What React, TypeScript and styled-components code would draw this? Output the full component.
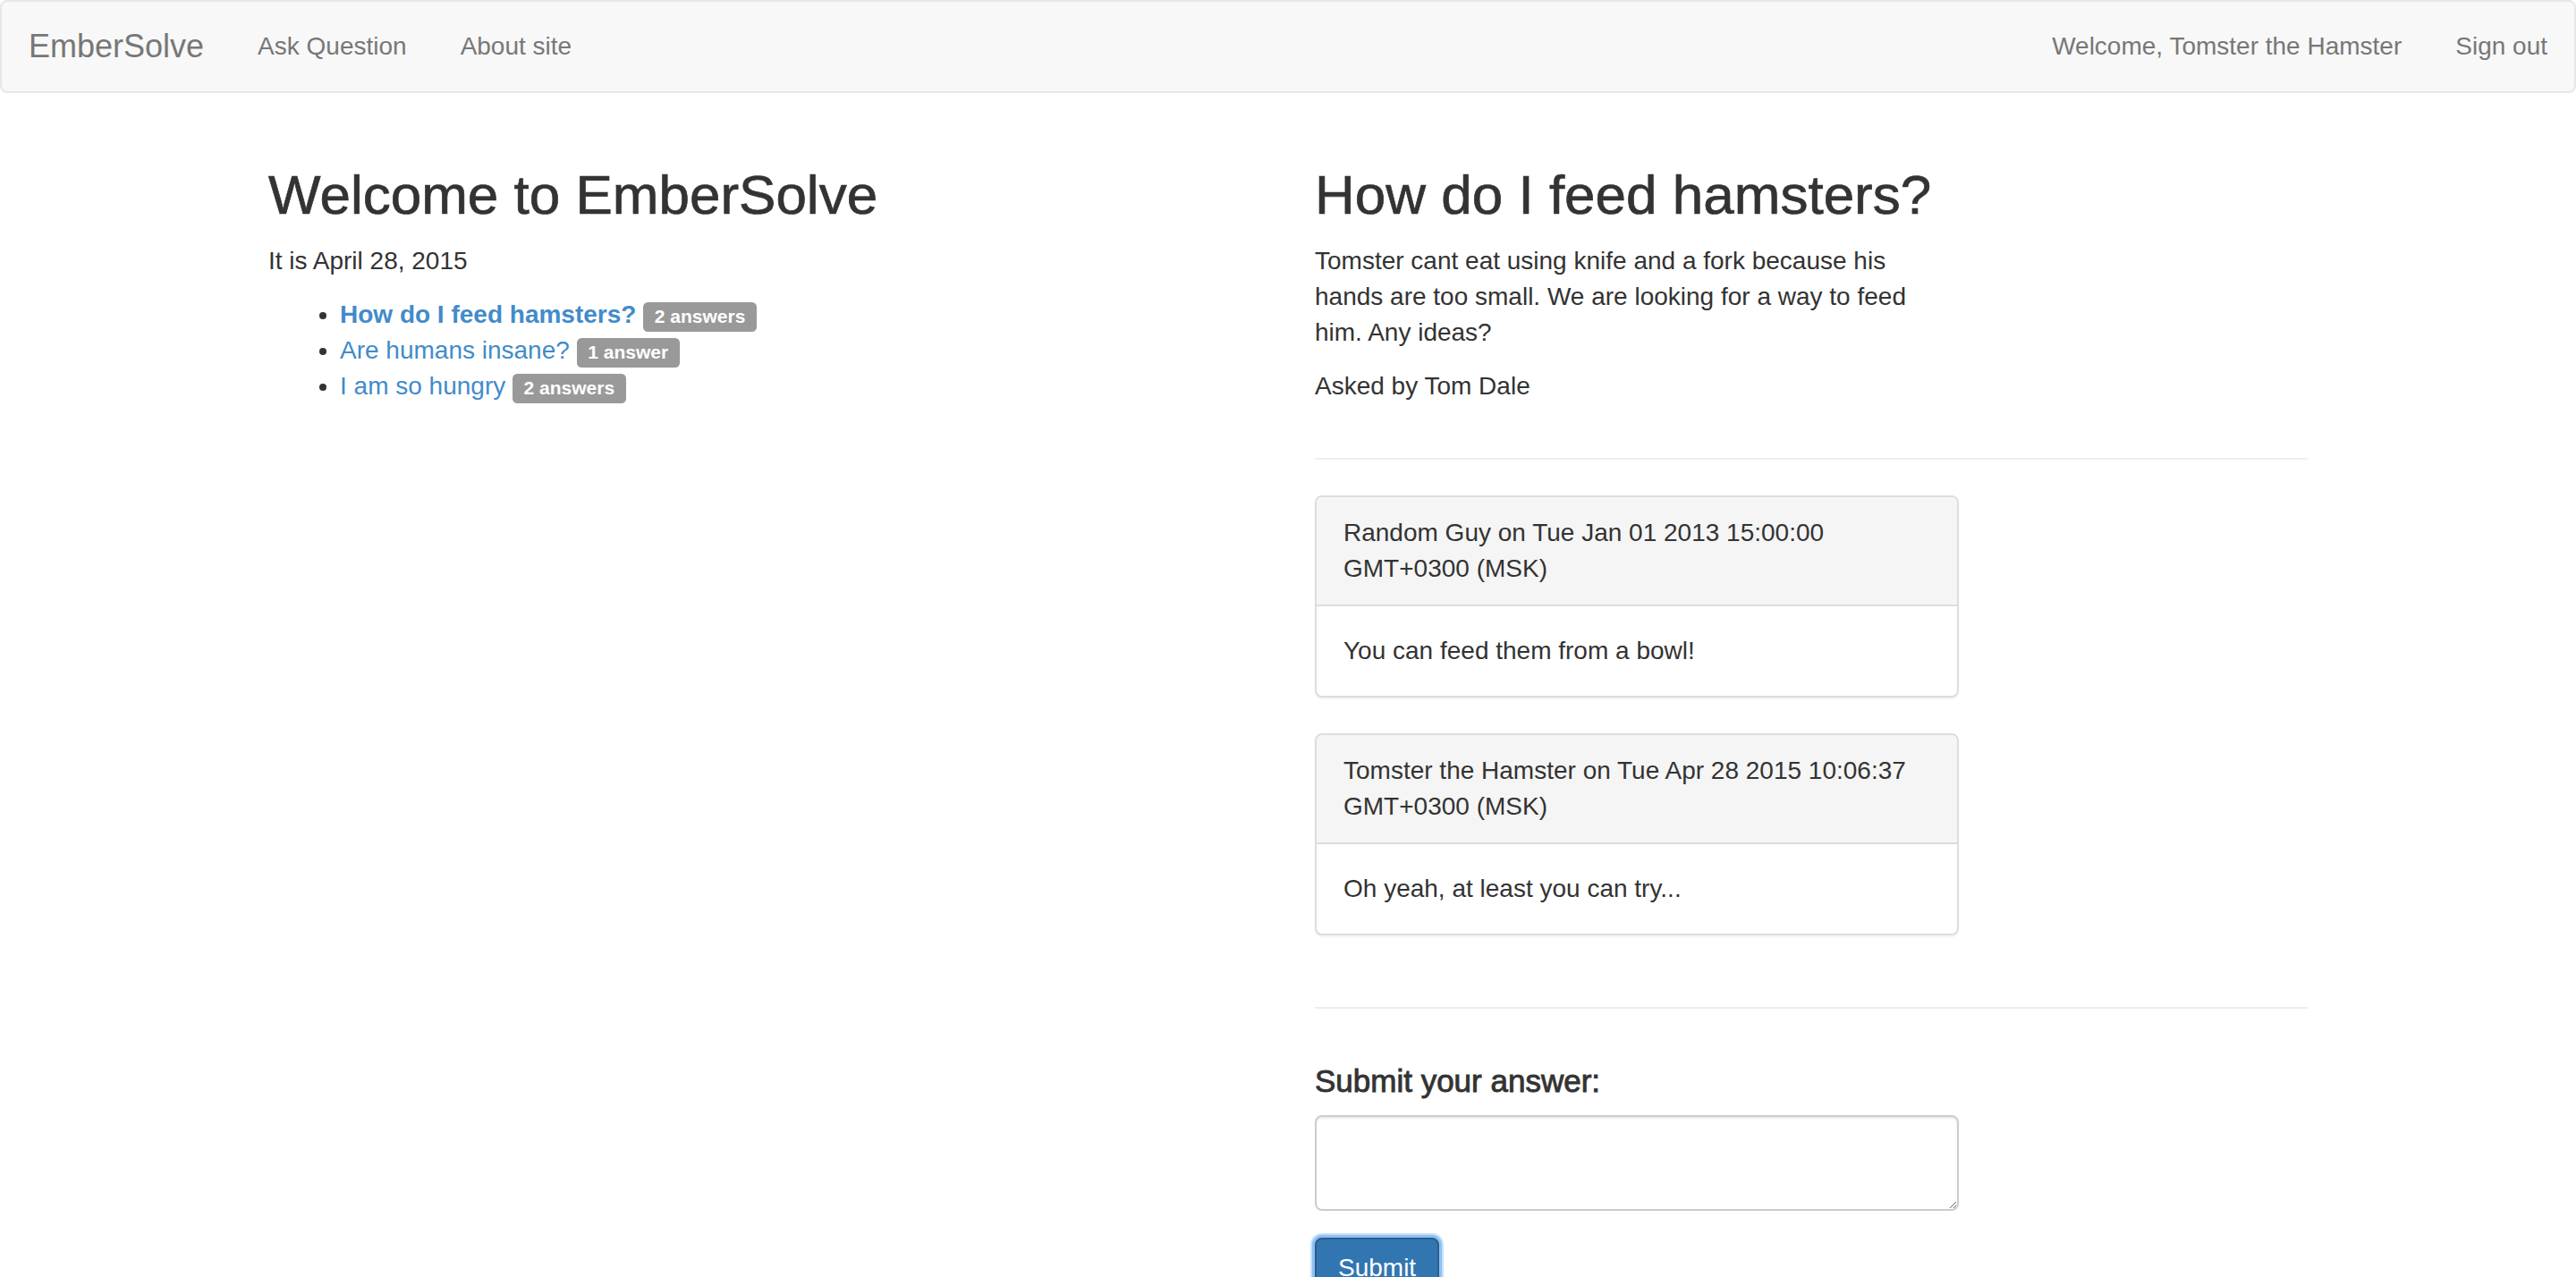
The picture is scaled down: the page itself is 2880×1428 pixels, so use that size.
import styled, { createGlobalStyle } from 'styled-components';

const GlobalStyle = createGlobalStyle`
  html, body {
    margin: 0;
    padding: 0;
    background: #fff;
  }
  body {
    font-family: "Liberation Sans", Helvetica, Arial, sans-serif;
    font-size: 28px;
    line-height: 40px;
    color: #333;
  }
  * { box-sizing: border-box; }
`;

const Navbar = styled.nav`
  display: flex;
  justify-content: space-between;
  align-items: stretch;
  height: 104px;
  margin-bottom: 40px;
  background: #f8f8f8;
  border: 2px solid #e7e7e7;
  border-radius: 8px;
`;

const NavGroup = styled.div`
  display: flex;
`;

const Brand = styled.a`
  display: block;
  padding: 30px;
  font-size: 36px;
  line-height: 40px;
  color: #777;
  text-decoration: none;
`;

const NavLink = styled.a`
  display: block;
  padding: 30px;
  font-size: 28px;
  line-height: 40px;
  color: #777;
  text-decoration: none;
  cursor: pointer;
`;

const Container = styled.div`
  width: 2340px;
  margin: 0 auto;
  padding: 0 30px;
`;

const Row = styled.div`
  display: flex;
  margin: 0 -30px;
`;

const Col = styled.div`
  width: 50%;
  padding: 0 30px;
  display: flex;
  flex-direction: column;
`;

const Title = styled.h1`
  margin: 40px 0 20px;
  font-size: 62px;
  line-height: 1.1;
  font-weight: 500;
  color: #333;
  -webkit-text-stroke: 0.7px #333;
`;

const Para = styled.p`
  margin: 0 0 20px;
`;

const QuestionList = styled.ul`
  margin: 0;
  padding-left: 80px;
`;

const QuestionLink = styled.a<{ $active?: boolean }>`
  color: #428bca;
  text-decoration: none;
  font-weight: ${p => (p.$active ? 'bold' : 'normal')};
`;

const Badge = styled.span`
  display: inline;
  padding: 0.2em 0.6em 0.3em;
  font-size: 75%;
  font-weight: bold;
  line-height: 1;
  color: #fff;
  background: #999;
  border-radius: 0.25em;
  white-space: nowrap;
  vertical-align: baseline;
`;

const Narrow = styled.div`
  max-width: 720px;
`;

const Rule = styled.hr`
  width: 100%;
  margin: 40px 0;
  border: 0;
  border-top: 2px solid #eee;
`;

const Panel = styled.div`
  margin-bottom: 40px;
  background: #fff;
  border: 2px solid #ddd;
  border-radius: 8px;
  box-shadow: 0 2px 2px rgba(0, 0, 0, 0.05);
`;

const PanelHeading = styled.div`
  padding: 20px 30px;
  background: #f5f5f5;
  border-bottom: 2px solid #ddd;
  border-radius: 6px 6px 0 0;
`;

const PanelBody = styled.div`
  padding: 30px;
`;

const FormTitle = styled.h4`
  margin: 22px 0 18px;
  font-size: 35px;
  line-height: 1.1;
  font-weight: 500;
  color: #333;
  -webkit-text-stroke: 0.9px #333;
`;

const AnswerBox = styled.textarea`
  display: block;
  width: 720px;
  height: 107px;
  margin-bottom: 30px;
  padding: 12px 24px;
  font-family: inherit;
  font-size: 28px;
  line-height: 40px;
  color: #555;
  background: #fff;
  border: 2px solid #ccc;
  border-radius: 8px;
  box-shadow: inset 0 2px 2px rgba(0, 0, 0, 0.075);
  outline: none;
`;

const SubmitButton = styled.button`
  align-self: flex-start;
  padding: 12px 24px;
  font-family: inherit;
  font-size: 28px;
  line-height: 40px;
  color: #fff;
  background: #3276b1;
  border: 2px solid #285e8e;
  border-radius: 8px;
  box-shadow: 0 0 0 3px #8fc0f0, 0 0 0 5px rgba(160, 205, 250, 0.6);
  cursor: pointer;
`;

const questions = [
  { title: 'How do I feed hamsters?', answers: '2 answers', active: true },
  { title: 'Are humans insane?', answers: '1 answer' },
  { title: 'I am so hungry', answers: '2 answers' },
];

const answers = [
  {
    head: 'Random Guy on Tue Jan 01 2013 15:00:00 GMT+0300 (MSK)',
    body: 'You can feed them from a bowl!',
  },
  {
    head: 'Tomster the Hamster on Tue Apr 28 2015 10:06:37 GMT+0300 (MSK)',
    body: 'Oh yeah, at least you can try...',
  },
];

export default function App() {
  return (
    <>
      <GlobalStyle />
      <Navbar>
        <NavGroup>
          <Brand>EmberSolve</Brand>
          <NavLink>Ask Question</NavLink>
          <NavLink>About site</NavLink>
        </NavGroup>
        <NavGroup>
          <NavLink>Welcome, Tomster the Hamster</NavLink>
          <NavLink>Sign out</NavLink>
        </NavGroup>
      </Navbar>
      <Container>
        <Row>
          <Col>
            <Title>Welcome to EmberSolve</Title>
            <Para>It is April 28, 2015</Para>
            <QuestionList>
              {questions.map(q => (
                <li key={q.title}>
                  <QuestionLink $active={q.active}>{q.title}</QuestionLink>{' '}
                  <Badge>{q.answers}</Badge>
                </li>
              ))}
            </QuestionList>
          </Col>
          <Col>
            <Title>How do I feed hamsters?</Title>
            <Narrow>
              <Para>
                Tomster cant eat using knife and a fork because his hands are too small. We are
                looking for a way to feed him. Any ideas?
              </Para>
              <Para>Asked by Tom Dale</Para>
            </Narrow>
            <Rule />
            <Narrow>
              {answers.map(a => (
                <Panel key={a.head}>
                  <PanelHeading>{a.head}</PanelHeading>
                  <PanelBody>{a.body}</PanelBody>
                </Panel>
              ))}
            </Narrow>
            <Rule />
            <FormTitle>Submit your answer:</FormTitle>
            <AnswerBox />
            <SubmitButton>Submit</SubmitButton>
          </Col>
        </Row>
      </Container>
    </>
  );
}
